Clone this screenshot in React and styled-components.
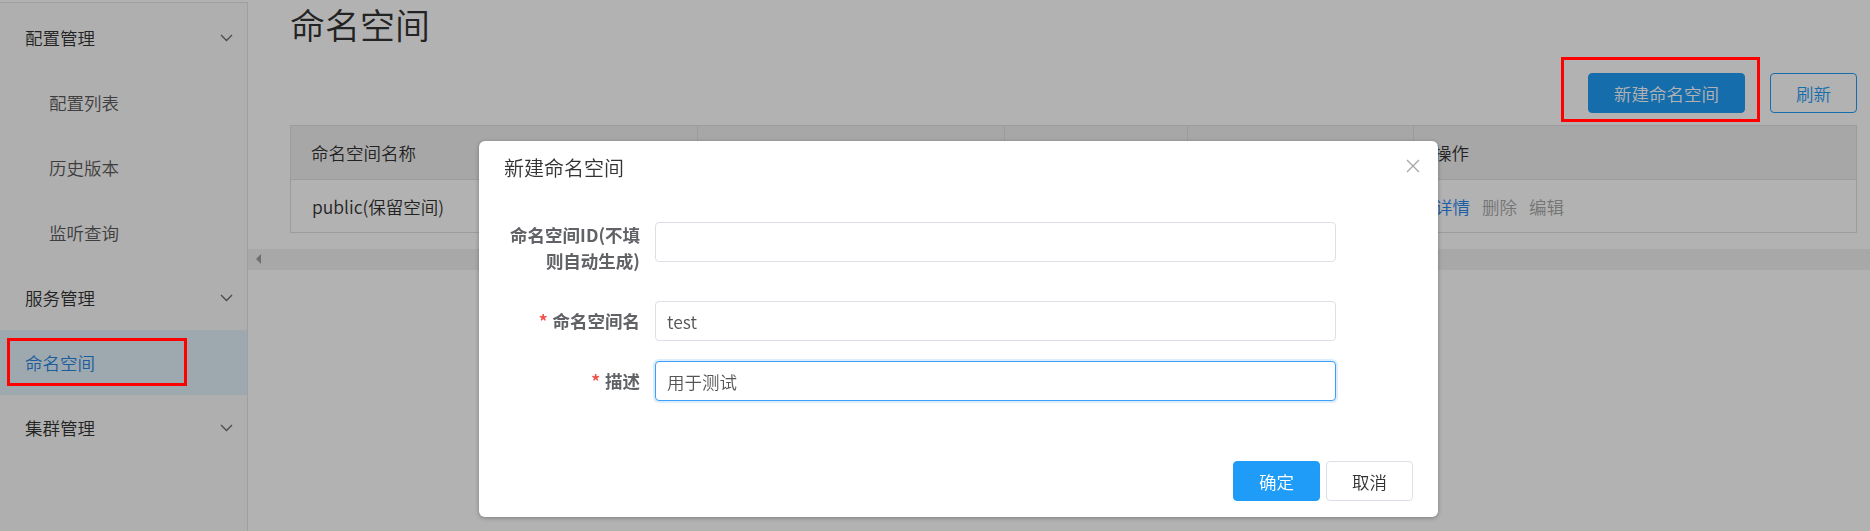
import React from 'react';
import styled, { createGlobalStyle } from 'styled-components';

const GlobalStyle = createGlobalStyle`
  html, body {
    margin: 0;
    padding: 0;
    background: #fff;
    overflow: hidden;
  }
  body {
    font-family: "Noto Sans CJK SC", "Liberation Sans", sans-serif;
    font-weight: 350;
    color: #333;
  }
  * {
    box-sizing: border-box;
  }
`;

const menu = [
  { label: '配置管理', group: true },
  { label: '配置列表' },
  { label: '历史版本' },
  { label: '监听查询' },
  { label: '服务管理', group: true },
  { label: '命名空间', group: true, active: true },
  { label: '集群管理', group: true },
];

const columns = ['命名空间名称', '', '', '', '操作'];

const Chevron = () => (
  <svg width="13" height="8" viewBox="0 0 13 8" fill="none">
    <polyline points="1,1 6.5,6.5 12,1" stroke="#6a6a6a" strokeWidth="1.3" />
  </svg>
);

const CloseIcon = () => (
  <svg width="14" height="14" viewBox="0 0 14 14" fill="none">
    <line x1="1" y1="1" x2="13" y2="13" stroke="#a6a6a6" strokeWidth="1.3" />
    <line x1="13" y1="1" x2="1" y2="13" stroke="#a6a6a6" strokeWidth="1.3" />
  </svg>
);

const App = () => {
  return (
    <>
      <GlobalStyle />
      <Page>
        <Sidebar>
          {menu.map(item => (
            <MenuItem key={item.label} $sub={!item.group} $active={item.active}>
              <span>{item.label}</span>
              {item.group && !item.active && <Chevron />}
            </MenuItem>
          ))}
        </Sidebar>
        <Main>
          <Content>
            <Title>命名空间</Title>
            <Toolbar>
              <Button $primary>新建命名空间</Button>
              <Button $outline>刷新</Button>
            </Toolbar>
            <Table>
              {columns.map((c, i) => (
                <HeadCell key={'h' + i} $last={i === columns.length - 1}>
                  {c}
                </HeadCell>
              ))}
              <Cell>public(保留空间)</Cell>
              <Cell />
              <Cell />
              <Cell />
              <Cell $last>
                <Link $primary>详情</Link>
                <Link>删除</Link>
                <Link>编辑</Link>
              </Cell>
            </Table>
          </Content>
          <ScrollTrack>
            <ScrollArrow />
          </ScrollTrack>
        </Main>

        <Overlay />

        <Dialog>
          <DialogHeader>新建命名空间</DialogHeader>
          <CloseButton>
            <CloseIcon />
          </CloseButton>
          <Form>
            <FormItem>
              <Label $multi>
                <span>命名空间ID(不填</span>
                <br />
                <span>则自动生成)</span>
              </Label>
              <Input readOnly defaultValue="" />
            </FormItem>
            <FormItem>
              <Label>
                <Star>*</Star>命名空间名
              </Label>
              <Input readOnly defaultValue="test" />
            </FormItem>
            <FormItem>
              <Label>
                <Star>*</Star>描述
              </Label>
              <Input readOnly defaultValue="用于测试" $focus />
            </FormItem>
          </Form>
          <DialogFooter>
            <DialogButton $primary>确定</DialogButton>
            <DialogButton>取消</DialogButton>
          </DialogFooter>
        </Dialog>

        <Marker style={{ left: 7, top: 338, width: 180, height: 48 }} />
        <Marker style={{ left: 1561, top: 57, width: 199, height: 65 }} />
      </Page>
    </>
  );
};

export default App;

const Page = styled.div`
  position: relative;
  display: flex;
  width: 1870px;
  height: 531px;
`;

const Sidebar = styled.aside`
  flex: none;
  width: 248px;
  margin-top: 2px;
  padding-top: 2px;
  background: #fbfbfb;
  border-top: 1px solid #e4e4e4;
  border-right: 1px solid #e4e4e4;
`;

const MenuItem = styled.div`
  display: flex;
  align-items: center;
  justify-content: space-between;
  height: 65px;
  padding-left: ${props => (props.$sub ? '49px' : '25px')};
  padding-right: 14px;
  font-size: 17.5px;
  line-height: 26px;
  color: ${props => (props.$active ? '#2a86e2' : props.$sub ? '#5a5a5a' : '#333')};
  background: ${props => (props.$active ? '#e2f2fb' : 'transparent')};
`;

const Main = styled.main`
  flex: 1;
  min-width: 0;
  display: flex;
  flex-direction: column;
`;

const Content = styled.div`
  padding: 0 13px 0 42px;
`;

const Title = styled.h1`
  margin: 0;
  font-size: 35px;
  font-weight: 350;
  line-height: 48px;
  color: #333;
`;

const Toolbar = styled.div`
  display: flex;
  justify-content: flex-end;
  gap: 25px;
  margin-top: 25px;
`;

const Button = styled.div`
  height: 40px;
  padding: 0 25px;
  display: flex;
  align-items: center;
  border-radius: 4px;
  font-size: 17.5px;
  border: 1px solid #1f9cf7;
  color: ${props => (props.$primary ? '#fff' : '#1f9cf7')};
  background: ${props => (props.$primary ? '#1f9cf7' : '#fff')};
`;

const Table = styled.div`
  display: grid;
  grid-template-columns: 407px 307px 183px 226px 1fr;
  margin-top: 12px;
  border: 1px solid #e0e0e0;
  border-bottom: none;
`;

const HeadCell = styled.div`
  height: 54px;
  display: flex;
  align-items: center;
  padding-left: 20px;
  background: #f0f0f0;
  border-bottom: 1px solid #e0e0e0;
  border-right: ${props => (props.$last ? 'none' : '1px solid #e0e0e0')};
  font-size: 17.5px;
  color: #333;
`;

const Cell = styled.div`
  height: 53px;
  display: flex;
  align-items: center;
  gap: 12px;
  padding-left: 21px;
  border-bottom: 1px solid #e0e0e0;
  border-right: ${props => (props.$last ? 'none' : '1px solid #e0e0e0')};
  font-size: 17.5px;
  color: #333;
`;

const Link = styled.span`
  color: ${props => (props.$primary ? '#2a87ee' : '#a8a8a8')};
`;

const ScrollTrack = styled.div`
  position: relative;
  height: 21px;
  margin-top: 16px;
  background: #f1f1f1;
`;

const ScrollArrow = styled.span`
  position: absolute;
  left: 8px;
  top: 5px;
  width: 0;
  height: 0;
  border-top: 5px solid transparent;
  border-bottom: 5px solid transparent;
  border-right: 5px solid #a0a0a0;
`;

const Overlay = styled.div`
  position: fixed;
  inset: 0;
  background: rgba(0, 0, 0, 0.3);
  z-index: 10;
`;

const Dialog = styled.div`
  position: absolute;
  left: 479px;
  top: 141px;
  width: 959px;
  height: 376px;
  display: flex;
  flex-direction: column;
  background: #fff;
  border-radius: 6px;
  box-shadow: 0 1px 4px rgba(0, 0, 0, 0.3);
  z-index: 20;
`;

const DialogHeader = styled.div`
  padding: 12px 25px;
  font-size: 20px;
  line-height: 30px;
  color: #333;
`;

const CloseButton = styled.div`
  position: absolute;
  top: 18px;
  right: 18px;
  width: 14px;
  height: 14px;
  display: flex;
`;

const Form = styled.div`
  padding: 27px 102px 0 26px;
`;

const FormItem = styled.div`
  display: flex;
  align-items: flex-start;
  margin-bottom: 20px;
`;

const Label = styled.label`
  flex: none;
  width: 150px;
  padding: ${props => (props.$multi ? '0 15px 7px 0' : '7px 15px 7px 0')};
  text-align: right;
  font-size: 17.5px;
  font-weight: 700;
  line-height: 26px;
  color: #606266;
  white-space: nowrap;
`;

const Star = styled.span`
  color: #f0524a;
  margin-right: 5px;
`;

const Input = styled.input`
  flex: 1;
  height: 40px;
  padding: 0 11px;
  border-radius: 4px;
  border: 1px solid ${props => (props.$focus ? '#3d9ef5' : '#dcdfe6')};
  box-shadow: ${props => (props.$focus ? '0 0 0 2px #dcedfd' : 'none')};
  outline: none;
  font: inherit;
  font-size: 17.5px;
  color: #555;
  background: #fff;
`;

const DialogFooter = styled.div`
  margin-top: auto;
  display: flex;
  justify-content: flex-end;
  gap: 6px;
  padding: 0 25px 16px;
`;

const DialogButton = styled.div`
  width: 87px;
  height: 40px;
  display: flex;
  align-items: center;
  justify-content: center;
  border-radius: 4px;
  font-size: 17.5px;
  border: 1px solid ${props => (props.$primary ? '#1f9cf7' : '#dcdfe6')};
  color: ${props => (props.$primary ? '#fff' : '#333')};
  background: ${props => (props.$primary ? '#1f9cf7' : '#fff')};
`;

const Marker = styled.div`
  position: absolute;
  border: 3px solid #ff0000;
  z-index: 30;
  pointer-events: none;
`;
